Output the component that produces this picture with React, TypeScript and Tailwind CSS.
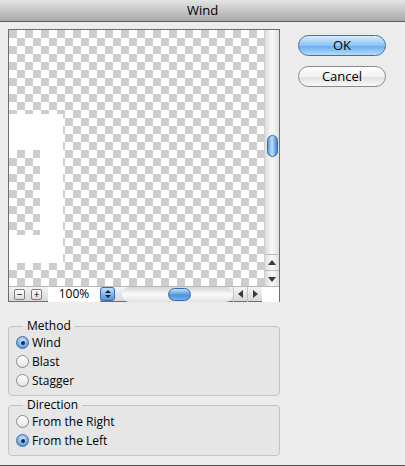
import { ReactNode } from "react";

const font = { fontFamily: '"Lucida Grande", "Open Sans", "DejaVu Sans", sans-serif' };

function Radio({ label, checked }: { label: string; checked?: boolean }) {
  return (
    <div className="flex items-center h-[19px] pl-[7px]">
      {checked ? (
        <span className="w-[13px] h-[13px] rounded-full border border-[#3f6fa8] bg-[radial-gradient(circle_at_50%_35%,#d6ecff,#5aa2e6_70%,#2f6fbf)] flex items-center justify-center">
          <span className="w-[4px] h-[4px] rounded-full bg-[#1b2a3c]" />
        </span>
      ) : (
        <span className="w-[13px] h-[13px] rounded-full border border-[#8a8a8a] bg-[linear-gradient(#ffffff,#e4e4e4)]" />
      )}
      <span className="ml-[3px] text-[12px] font-medium text-black">{label}</span>
    </div>
  );
}

function Group({ title, children }: { title: string; children: ReactNode }) {
  return (
    <fieldset className="ml-[8px] w-[272px] border border-[#c4c4c4] rounded-[4px] bg-[#e6e6e6] pb-[5px]">
      <legend className="ml-[14px] px-[4px] text-[12px] font-medium leading-[14px] text-black">{title}</legend>
      {children}
    </fieldset>
  );
}

function Arrow({ dir }: { dir: "up" | "down" | "left" | "right" }) {
  const pts = {
    up: "1,7 5,2 9,7",
    down: "1,3 5,8 9,3",
    left: "7,1 2,5 7,9",
    right: "3,1 8,5 3,9",
  }[dir];
  return (
    <svg width="10" height="10" viewBox="0 0 10 10">
      <polygon points={pts} fill="#3a3a3a" />
    </svg>
  );
}

function Blobs() {
  return (
    <>
      <div className="absolute left-0 top-[84px] w-[54px] h-[36px] bg-white" />
      <div className="absolute left-[31px] top-[120px] w-[23px] h-[85px] bg-white" />
      <div className="absolute left-0 top-[205px] w-[54px] h-[28px] bg-white" />
    </>
  );
}

export default function App() {
  return (
    <div className="w-[405px] h-[466px] bg-[#ececec] flex flex-col border-b border-[#555]" style={font}>
      {/* title bar */}
      <div className="h-[22px] shrink-0 bg-[linear-gradient(#e4e4e4,#a9a9a9)] border-b border-[#5e5e5e] flex items-center justify-center">
        <span className="text-[13px] font-medium text-black">Wind</span>
      </div>

      <div className="flex mt-[7px]">
        {/* preview */}
        <div className="ml-[8px] w-[272px] h-[273px] border border-[#6d6d6d] bg-white flex flex-col">
          <div className="flex">
            <div className="relative w-[255px] h-[256px] bg-[conic-gradient(#fff_25%,#cdcdcd_0_50%,#fff_0_75%,#cdcdcd_0)] bg-[length:16px_16px] overflow-hidden">
              <Blobs />
            </div>
            <div className="w-[15px] h-[256px] bg-[linear-gradient(90deg,#dcdcdc,#fafafa_50%,#e0e0e0)] border-l border-[#cfcfcf] flex flex-col">
              <div className="flex-1 relative rounded-t-full">
                <div className="absolute left-[2px] top-[105px] w-[11px] h-[22px] rounded-full border border-[#3b6aa6] bg-[linear-gradient(90deg,#5b9be0,#bfe0ff_45%,#3d84d8)]" />
              </div>
              <div className="h-[16px] border-t border-[#bdbdbd] flex items-center justify-center">
                <Arrow dir="up" />
              </div>
              <div className="h-[16px] border-t border-[#bdbdbd] flex items-center justify-center">
                <Arrow dir="down" />
              </div>
            </div>
          </div>
          <div className="h-[15px] flex items-center bg-[linear-gradient(#f4f4f4,#d8d8d8)] border-t border-[#b8b8b8]">
            <div className="ml-[5px] w-[11px] h-[11px] border border-[#7d7d7d] rounded-[2px] bg-[linear-gradient(#fff,#dcdcdc)] flex items-center justify-center text-[10px] leading-none">−</div>
            <div className="ml-[6px] w-[11px] h-[11px] border border-[#7d7d7d] rounded-[2px] bg-[linear-gradient(#fff,#dcdcdc)] flex items-center justify-center text-[10px] leading-none">+</div>
            <div className="ml-[6px] w-[52px] h-[15px] bg-white flex items-center justify-center text-[12px] text-black">100%</div>
            <div className="w-[15px] h-[14px] rounded-[3px] border border-[#3b6aa6] bg-[linear-gradient(#bfe0ff,#4f93dd)] flex flex-col items-center justify-center">
              <svg width="6" height="10" viewBox="0 0 6 10">
                <polygon points="0,4 3,1 6,4" fill="#1a2230" />
                <polygon points="0,6 3,9 6,6" fill="#1a2230" />
              </svg>
            </div>
            <div className="ml-[7px] w-[111px] h-[15px] relative rounded-full bg-[linear-gradient(#d6d6d6,#fafafa_50%,#e2e2e2)]">
              <div className="absolute left-[46px] top-[1px] w-[23px] h-[13px] rounded-full border border-[#3b6aa6] bg-[linear-gradient(#bfe0ff,#4f93dd_55%,#6fb0f0)]" />
            </div>
            <div className="w-[14px] h-[15px] border-l border-[#c4c4c4] flex items-center justify-center"><Arrow dir="left" /></div>
            <div className="w-[15px] h-[15px] border-l border-[#c4c4c4] flex items-center justify-center"><Arrow dir="right" /></div>
            <div className="flex-1 h-[15px] bg-white" />
          </div>
        </div>

        {/* buttons */}
        <div className="ml-[18px] mt-[6px] flex flex-col gap-[10px]">
          <button className="w-[88px] h-[21px] rounded-full border border-[#4a6f9c] bg-[linear-gradient(#d7ecff,#8cc3f3_50%,#6cb0ee_55%,#b5dcff)] text-[13px] font-medium text-black leading-none">OK</button>
          <button className="w-[88px] h-[21px] rounded-full border border-[#8a8a8a] bg-[linear-gradient(#ffffff,#f2f2f2_50%,#e2e2e2_55%,#f8f8f8)] text-[13px] font-medium text-black leading-none">Cancel</button>
        </div>
      </div>

      <div className="mt-[17px] flex flex-col gap-[2px]">
        <Group title="Method">
          <Radio label="Wind" checked />
          <Radio label="Blast" />
          <Radio label="Stagger" />
        </Group>
        <Group title="Direction">
          <Radio label="From the Right" />
          <Radio label="From the Left" checked />
        </Group>
      </div>
    </div>
  );
}
